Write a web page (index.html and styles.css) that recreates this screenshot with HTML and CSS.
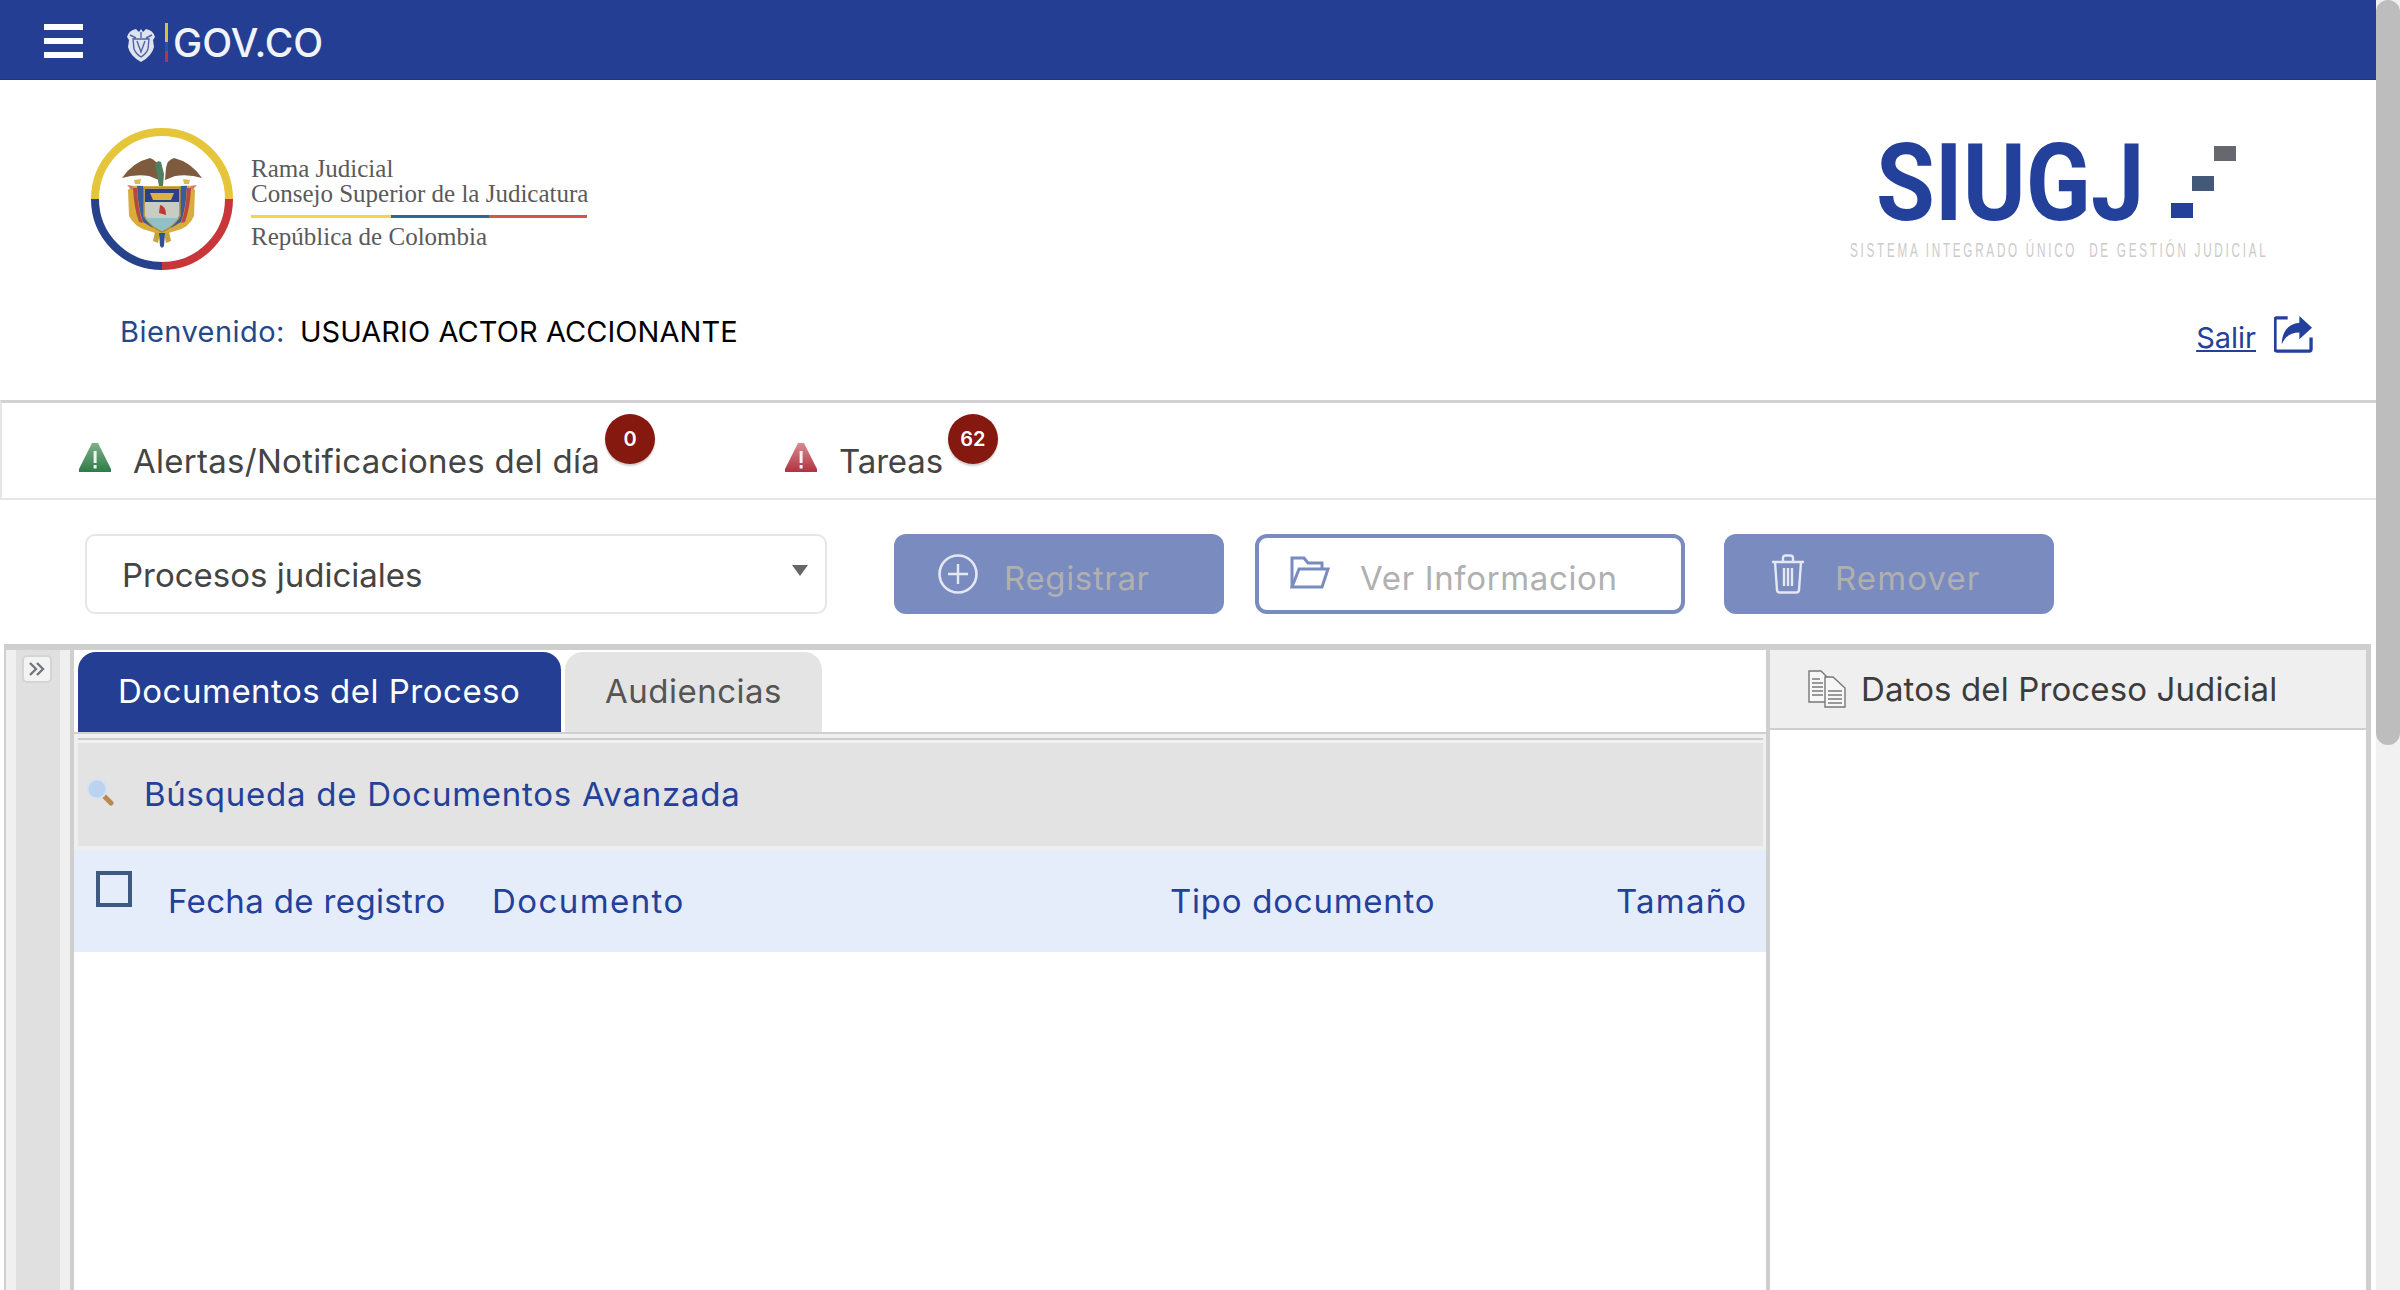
FILE: index.html
```html
<!DOCTYPE html>
<html lang="es">
<head>
<meta charset="utf-8">
<title>SIUGJ</title>
<link rel="stylesheet" href="styles.css">
</head>
<body>
<div class="app">
  <div class="page">
    <header class="topbar">
      <div class="burger"><span></span><span></span><span></span></div>
      <svg class="gov-shield" viewBox="0 0 30 36"><path d="M1 10 Q3 3 10 2 L13 5 L15 2 L17 5 L20 2 Q27 3 29 10 L27 13 L28 20 Q26 29 15 35 Q4 29 2 20 L3 13 Z" fill="#dfe3f0"/><path d="M7 12 H23 L22 22 Q20 27 15 30 Q10 27 8 22 Z M11 14 L15 25 L19 14 M15 5 V11 M4 8 L10 11 M26 8 L20 11" fill="none" stroke="#4f64a6" stroke-width="1.4"/></svg>
      <span class="gov-flag"></span>
      <span class="gov-text">GOV.CO</span>
    </header>

    <section class="brand">
      <div class="brand-left">
        <div class="judicial">
          <svg class="seal" viewBox="0 0 142 142">
            <path d="M4 71 A67 67 0 0 1 138 71" fill="none" stroke="#e5c63a" stroke-width="8"/>
            <path d="M4 71 A67 67 0 0 0 71 138" fill="none" stroke="#27428b" stroke-width="8"/>
            <path d="M71 138 A67 67 0 0 0 138 71" fill="none" stroke="#c8363a" stroke-width="8"/>
            <path d="M37 62 Q42 56 52 58 L90 58 Q100 56 104 62 L103 88 Q98 100 84 103 L71 107 L58 103 Q44 100 38 88Z" fill="#d8ad3c"/>
            <path d="M46 58 L52 58 L62 100 L52 94 Q47 80 46 58Z M96 58 L90 58 L80 100 L90 94 Q95 80 96 58Z" fill="#3b5c9a"/>
            <path d="M42 60 L46 60 Q47 82 52 95 L48 94 Q43 80 42 60Z M100 60 L96 60 Q95 82 90 95 L94 94 Q99 80 100 60Z" fill="#b9483e"/>
            <path d="M31 50 Q42 34 59 30 Q66 32 67 40 L68 52 L58 48 Q44 46 31 50Z M111 50 Q100 34 83 30 Q76 32 75 40 L74 52 L84 48 Q98 46 111 50Z" fill="#7e5a3e"/>
            <path d="M64 36 Q66 32 70 34 L73 46 L72 58 L68 58Z" fill="#4f7f5e"/>
            <path d="M43 52 L50 51 L49 56 L44 56Z M92 51 L99 52 L98 56 L93 56Z" fill="#d9bb57"/>
            <path d="M36 57 L43 58 L41 62Z M106 57 L99 58 L101 62Z" fill="#cf7c6c"/>
            <path d="M53 60 L89 60 L89 88 Q82 99 71 104 Q60 99 53 88Z" fill="#c9ccc4" stroke="#b08a2a" stroke-width="1.5"/>
            <rect x="54" y="61" width="34" height="13" fill="#2c3f8c"/>
            <path d="M59 65 L83 65 L80 72 L62 72Z" fill="#d9b23f"/>
            <path d="M69 77 Q75 78 75 87 L68 85Z" fill="#bb3a36"/>
            <path d="M54 90 L88 90 L80 98 L71 103 L62 98Z" fill="#8fc2c8"/>
            <path d="M64 104 L69 105 L67 115 L62 113Z M78 104 L73 105 L75 115 L80 113Z" fill="#c7a43a"/>
            <path d="M68 105 L74 105 L73 118 L71 120 L69 118Z" fill="#35508f"/>
          </svg>
          <div class="judicial-text">
            <div class="j-line">Rama Judicial</div>
            <div class="j-line">Consejo Superior de la Judicatura</div>
            <div class="tricolor"><i class="c-y"></i><i class="c-b"></i><i class="c-r"></i></div>
            <div class="j-line">República de Colombia</div>
          </div>
        </div>
        <div class="welcome"><span class="welcome-label">Bienvenido:</span><span class="welcome-user">USUARIO ACTOR ACCIONANTE</span></div>
      </div>
      <div class="brand-right">
        <div class="siugj">
          <div class="siugj-top">
            <span class="siugj-word">SIUGJ</span>
            <span class="pixels"><i class="px px1"></i><i class="px px2"></i><i class="px px3"></i></span>
          </div>
          <div class="siugj-sub">SISTEMA INTEGRADO ÚNICO  DE GESTIÓN JUDICIAL</div>
        </div>
        <div class="logout">
          <a class="salir" href="#">Salir</a>
          <svg class="share" viewBox="0 0 40 40"><path d="M14 4 H3 a2 2 0 0 0 -2 2 V36 a2 2 0 0 0 2 2 H36 a2 2 0 0 0 2 -2 V24" fill="none" stroke="#23409a" stroke-width="3.4"/><path d="M26 2 L39 14 L26 26 V19 C18 19 12 22 8 31 C8 19 14 10 26 9Z" fill="#23409a"/></svg>
        </div>
      </div>
    </section>

    <section class="alerts">
      <div class="alert-item alert-green">
        <svg class="warn" viewBox="0 0 32 30"><defs><linearGradient id="gg" x1="0" x2="0" y1="0" y2="1"><stop offset="0" stop-color="#7fb08a"/><stop offset="1" stop-color="#2d7c47"/></linearGradient></defs><path d="M13 1 H19 L32 27 V30 H0 V27Z" fill="url(#gg)"/><rect x="14.6" y="9" width="3" height="12" fill="#f4f4f4"/><rect x="14.6" y="23" width="3" height="3.5" fill="#f4f4f4"/></svg>
        <span class="alert-text alert-long">Alertas/Notificaciones del día</span>
        <span class="badge">0</span>
      </div>
      <div class="alert-item alert-red">
        <svg class="warn" viewBox="0 0 32 30"><defs><linearGradient id="gr" x1="0" x2="0" y1="0" y2="1"><stop offset="0" stop-color="#d98a90"/><stop offset="1" stop-color="#b0323f"/></linearGradient></defs><path d="M13 1 H19 L32 27 V30 H0 V27Z" fill="url(#gr)"/><rect x="14.6" y="9" width="3" height="12" fill="#f4f4f4"/><rect x="14.6" y="23" width="3" height="3.5" fill="#f4f4f4"/></svg>
        <span class="alert-text">Tareas</span>
        <span class="badge">62</span>
      </div>
    </section>

    <section class="toolbar">
      <div class="select"><span class="select-text">Procesos judiciales</span><i class="caret"></i></div>
      <button class="btn btn-fill btn-reg" type="button">
        <svg class="ico-plus" viewBox="0 0 40 40"><circle cx="20" cy="20" r="18.5" fill="none" stroke="#e4e8f3" stroke-width="2.6"/><path d="M20 10 V30 M10 20 H30" stroke="#e4e8f3" stroke-width="2.4"/></svg>
        <span>Registrar</span>
      </button>
      <button class="btn btn-line" type="button">
        <svg class="ico-folder" viewBox="0 0 40 33"><path d="M2 31 V2 H14 L18 7 H32 V12" fill="none" stroke="#7a8bbf" stroke-width="3"/><path d="M2 31 L9 13 H38 L32 31Z" fill="none" stroke="#7a8bbf" stroke-width="3"/></svg>
        <span>Ver Informacion</span>
      </button>
      <button class="btn btn-fill btn-rem" type="button">
        <svg class="ico-trash" viewBox="0 0 36 40"><path d="M2 8 H34 M13 8 V4 Q13 1.500 16 1.500 H20 Q23 1.500 23 4 V8 M5 8 L7 36 Q7 38.500 10 38.500 H26 Q29 38.500 29 36 L31 8 M14 14 V32 M18 14 V32 M22 14 V32" fill="none" stroke="#e4e8f3" stroke-width="2.4"/></svg>
        <span>Remover</span>
      </button>
    </section>

    <section class="workspace">
      <aside class="rail">
        <button class="rail-toggle" type="button"><svg viewBox="0 0 18 14"><path d="M2 1 L8 7 L2 13 M9 1 L15 7 L9 13" fill="none" stroke="#71767f" stroke-width="2.4"/></svg></button>
      </aside>
      <div class="docs">
        <div class="tabs">
          <div class="tab tab-active">Documentos del Proceso</div>
          <div class="tab tab-idle">Audiencias</div>
        </div>
        <div class="search">
          <svg class="lens" viewBox="0 0 28 28"><path d="M17 17 L25 25" stroke="#b98a4e" stroke-width="5" stroke-linecap="round"/><circle cx="11" cy="11" r="9.500" fill="#bcd3ef" stroke="#d5e2f2" stroke-width="2"/></svg>
          <span class="search-text">Búsqueda de Documentos Avanzada</span>
        </div>
        <div class="grid-head">
          <i class="check"></i>
          <span class="col col-date">Fecha de registro</span>
          <span class="col col-doc">Documento</span>
          <span class="col col-type">Tipo documento</span>
          <span class="col col-size">Tamaño</span>
        </div>
      </div>
      <aside class="details">
        <div class="details-head">
          <svg class="ico-docs" viewBox="0 0 38 38"><path d="M1 1 H13 L21 9 V32 H1Z" fill="#f7f7f7" stroke="#777" stroke-width="1.400"/><path d="M17 7 H25 L37 18 V37 H17Z" fill="#f7f7f7" stroke="#777" stroke-width="1.400"/><path d="M4 9 H12 M4 13 H15 M4 17 H15 M4 21 H15 M4 25 H15 M20 21 H34 M20 25 H34 M20 29 H34 M20 33 H34" stroke="#999" stroke-width="1.800"/></svg>
          <span class="details-title">Datos del Proceso Judicial</span>
        </div>
      </aside>
    </section>
  </div>
  <div class="scrollbar"><div class="thumb"></div></div>
</div>
</body>
</html>
```

FILE: styles.css
```css
* { box-sizing: border-box; }
html, body { margin: 0; padding: 0; height: 100%; background: #fff; overflow: hidden; }
body { font-family: Inter, "Open Sans", "Liberation Sans", sans-serif; color: #444; }
i { display: block; font-style: normal; }

.app { display: flex; height: 1290px; }
.page { width: 2376px; flex: none; display: flex; flex-direction: column; }

.scrollbar { width: 24px; flex: none; background: #f1f1f1; }
.thumb { height: 745px; background: #bdbdbd; border-radius: 12px; }

.topbar { height: 80px; flex: none; background: #233e93; display: flex; align-items: center; padding-left: 44px; box-shadow: inset 0 -1px 0 #1f3780; }
.burger { width: 39px; height: 34px; display: flex; flex-direction: column; justify-content: space-between; margin: 2px 43px 0 0; }
.burger span { height: 6px; background: #fff; }
.gov-shield { width: 30px; height: 36px; margin-top: 9px; }
.gov-flag { width: 3px; height: 39px; margin: 4px 0 0 9px; background: linear-gradient(#d9bf3a 0 50%, #2a52a8 50% 72%, #b93545 72%); }
.gov-text { font-size: 39px; font-weight: 500; color: #f1f3f9; margin: 6px 0 0 5px; line-height: 40px; }

.brand { height: 320px; flex: none; display: flex; justify-content: space-between; }
.brand-left { padding: 48px 0 0 91px; }
.judicial { display: flex; }
.seal { width: 142px; height: 142px; flex: none; }
.judicial-text { margin-left: 18px; padding-top: 28px; font-family: "Liberation Serif", serif; color: #5a5a5a; }
.j-line { font-size: 25px; line-height: 25px; white-space: nowrap; }
.tricolor { display: flex; height: 3px; margin: 9px 0 6px; }
.c-y { width: 140px; background: #f3d54b; }
.c-b { width: 98px; background: #35629f; }
.c-r { width: 98px; background: #d9534f; }
.welcome { margin: 45px 0 0 29px; font-size: 29px; line-height: 34px; white-space: nowrap; display: flex; }
.welcome-label { color: #23498a; letter-spacing: .45px; }
.welcome-user { color: #000; margin-left: 15px; letter-spacing: .07px; }

.brand-right { padding: 63px 63px 0 0; display: flex; flex-direction: column; align-items: flex-end; }
.siugj { width: 417px; margin-right: 46px; }
.siugj-top { display: flex; padding-left: 26px; height: 99px; }
.siugj-word { font-family: Roboto, sans-serif; font-weight: 700; font-size: 108px; line-height: 80px; color: #23409a; display: block; width: 261px; height: 80px; transform: scaleX(.885); transform-origin: left center; white-space: nowrap; }
.pixels { position: relative; display: block; margin-left: 34px; width: 65px; height: 75px; }
.px { position: absolute; width: 22px; height: 15px; }
.px1 { left: 0; top: 60px; background: #23409a; }
.px2 { left: 21px; top: 33px; background: #44597a; }
.px3 { left: 43px; top: 3px; background: #676770; }
.siugj-sub { font-family: "Liberation Sans", sans-serif; font-size: 21px; line-height: 16px; color: #cbcbcb; letter-spacing: 4.900px; white-space: pre; transform: scaleX(.557); transform-origin: left center; }
.logout { display: flex; align-items: flex-end; margin-top: 56px; }
.salir { font-size: 29px; line-height: 34px; color: #23409a; text-decoration: underline; margin-bottom: -1px; }
.share { width: 39px; height: 39px; margin: 0 0 1px 18px; }

.alerts { height: 100px; flex: none; display: flex; border-top: 3px solid #d2d2d2; border-bottom: 2px solid #e6e6e6; border-left: 2px solid #e6e6e6; padding: 11px 0 0 77px; }
.alert-item { display: flex; align-items: flex-start; }
.alert-red { margin-left: 130px; }
.warn { width: 32px; height: 30px; margin-top: 28px; flex: none; }
.alert-text { font-size: 33px; line-height: 40px; color: #444; margin: 27px 0 0 22px; white-space: nowrap; letter-spacing: -.15px; }
.alert-long { letter-spacing: .28px; }
.badge { width: 50px; height: 50px; border-radius: 50%; background: #85180f; color: #fff; font-size: 20px; font-weight: 600; display: flex; align-items: center; justify-content: center; margin-left: 5px; box-shadow: 0 2px 2px rgba(0,0,0,.2); }

.toolbar { height: 144px; flex: none; padding: 34px 0 0 85px; display: flex; align-items: flex-start; }
.select { width: 742px; height: 80px; border: 2px solid #e6e6e6; border-radius: 10px; display: flex; align-items: center; justify-content: space-between; padding: 0 17px 0 35px; font-size: 33px; color: #444; }
.select-text { margin-top: 2px; }
.caret { width: 0; height: 0; border-left: 8px solid transparent; border-right: 8px solid transparent; border-top: 11px solid #666; margin-top: -8px; }
.btn { height: 80px; border-radius: 12px; font: inherit; font-size: 33px; color: #b0b0b0; display: flex; align-items: center; padding: 0; flex: none; }
.btn span { line-height: 40px; margin-top: 7px; letter-spacing: .65px; }
.btn-fill { background: #7a8bbf; border: 0; }
.btn-line { background: #fff; border: 4px solid #7a8bbf; }
.btn-reg { width: 330px; margin-left: 67px; padding-left: 44px; }
.btn-line { width: 430px; margin-left: 31px; padding-left: 31px; }
.btn-rem { width: 330px; margin-left: 39px; padding-left: 46px; }
.btn-rem span { letter-spacing: 1.1px; }
.ico-plus { width: 40px; height: 40px; margin-right: 26px; }
.ico-folder { width: 40px; height: 33px; margin: -4px 30px 0 0; }
.ico-trash { width: 36px; height: 40px; margin-right: 29px; }

.workspace { flex: 1; display: flex; margin-left: 4px; width: 2367px; border-top: 6px solid #cfcfcf; min-height: 0; }
.rail { width: 70px; flex: none; display: flex; justify-content: center; padding: 5px 0 0 0; border-left: 2px solid #cfcfcf; border-right: 4px solid #cfcfcf; background: linear-gradient(90deg, #f0f0f0 0 10px, #e0e0e0 10px 54px, #efefef 54px); }
.rail-toggle { width: 30px; height: 28px; padding: 0; border: 2px solid #d4d4d4; border-radius: 5px; background: #f3f3f3; display: flex; align-items: center; justify-content: center; margin: 0 1px 0 -1px; }
.rail-toggle svg { width: 18px; height: 14px; }

.docs { width: 1692px; flex: none; }
.tabs { height: 84px; display: flex; align-items: flex-end; padding-left: 4px; gap: 4px; border-bottom: 2px solid #d0d0d0; }
.tab { height: 80px; border-radius: 18px 18px 0 0; display: flex; align-items: center; font-size: 33px; white-space: nowrap; padding-bottom: 2px; letter-spacing: .5px; }
.tab-active { width: 483px; background: #233e93; color: #fff; padding-left: 40px; }
.tab-idle { width: 257px; background: #e4e4e4; color: #555; padding-left: 40px; }
.search { height: 116px; border-top: 4px solid #f0f0f0; background: #e3e3e3; display: flex; align-items: center; padding-left: 8px; border-left: 4px solid #efefef; border-right: 3px solid #efefef; border-bottom: 4px solid #eeeeee; box-shadow: inset 0 2px 0 #cccccc, inset 0 5px 0 #f0f0f0; }
.lens { width: 28px; height: 28px; margin: 0 30px 0 0; }
.search-text { font-size: 33px; color: #23409a; white-space: nowrap; margin-top: 4px; letter-spacing: .75px; }
.grid-head { height: 102px; background: #e6edfa; display: grid; grid-template-columns: 94px 324px 678px 446px 1fr; align-items: center; color: #23409a; font-size: 33px; white-space: nowrap; }
.check { width: 36px; height: 36px; border: 4px solid #3e5a80; margin: -24px 0 0 22px; }
.col { display: block; padding-top: 0; }
.col-date { letter-spacing: .36px; }
.col-doc { letter-spacing: 1.42px; }
.col-type { letter-spacing: .75px; }
.col-size { letter-spacing: 1.2px; }

.details { width: 605px; flex: none; border-left: 4px solid #cfcfcf; border-right: 5px solid #cfcfcf; }
.details-head { height: 80px; background: #efefef; border-bottom: 2px solid #cfcfcf; display: flex; align-items: center; padding-left: 38px; }
.ico-docs { width: 38px; height: 38px; margin-right: 15px; }
.details-title { font-size: 33px; color: #3c3c3c; white-space: nowrap; letter-spacing: .12px; }
```
